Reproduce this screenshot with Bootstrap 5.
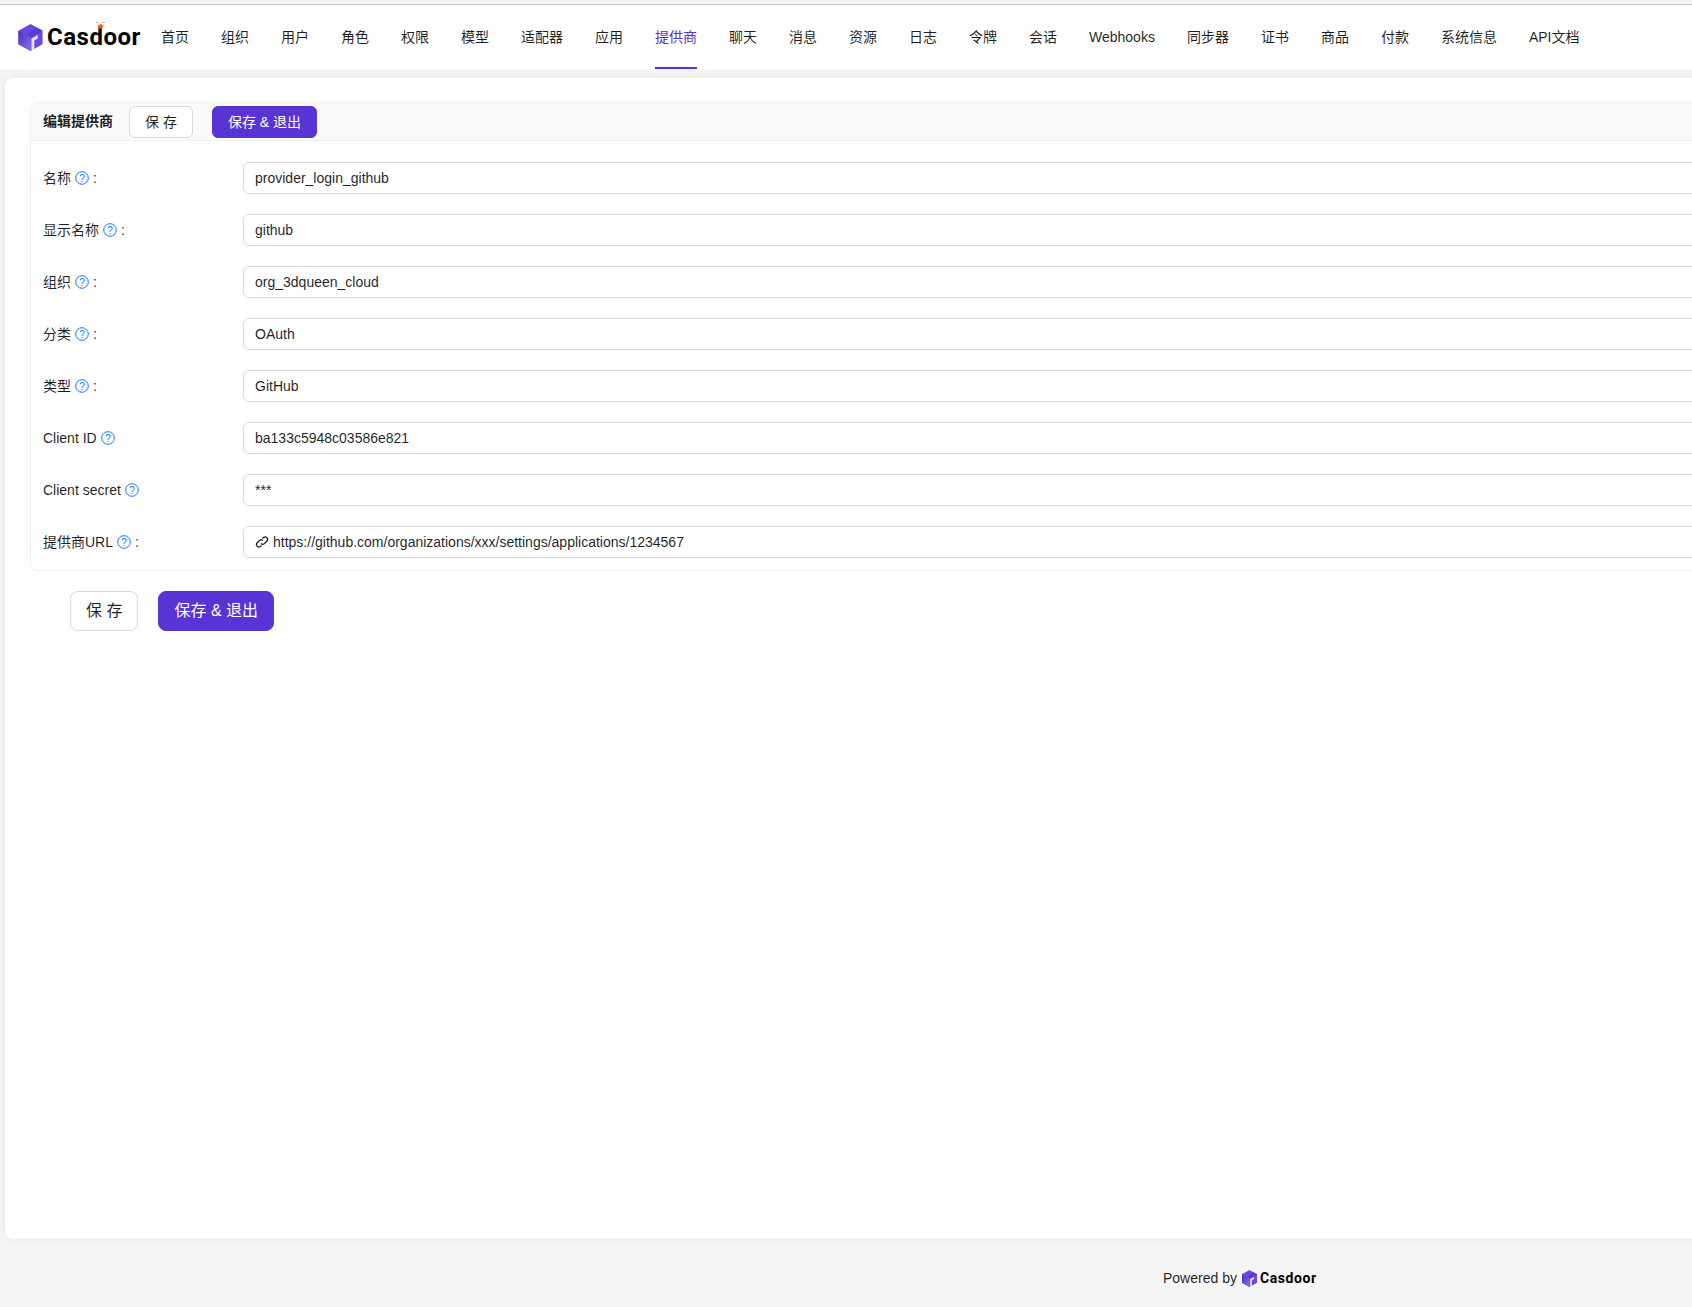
<!doctype html>
<html lang="zh">
<head>
<meta charset="utf-8">
<title>Casdoor</title>
<link href="https://cdn.jsdelivr.net/npm/bootstrap@5.3.0/dist/css/bootstrap.min.css" rel="stylesheet">
<style>
html,body{height:1307px;overflow:hidden}
body{background:#f5f5f5;font-family:"Liberation Sans","Noto Sans CJK SC",sans-serif;font-size:14px;color:rgba(0,0,0,.88);width:1692px}
.top-rule{height:5px;border-bottom:1px solid #ccc;background:#f5f5f5}
.app-bar{height:64px;background:#fff;align-items:stretch}
.brand-box{width:145px;flex:none;padding-left:18px}
.brand-word{font-family:Roboto,sans-serif;font-weight:700;font-size:24px;line-height:1;color:#000;margin-left:4px;letter-spacing:.5px;position:relative}
.brand-crown{position:absolute;left:49px;top:-3px}
.app-link{display:flex;align-items:center;padding:0 16px;color:rgba(0,0,0,.88);position:relative;text-decoration:none}
.app-link.is-on{color:#5734d3}
.app-link.is-on::after{content:"";position:absolute;left:16px;right:16px;bottom:0;height:2px;background:#5734d3}
.sheet{margin:9px 0 0 5px;width:1800px;height:1161px;background:#fff;border-radius:8px;padding:24px 25px;box-shadow:0 0 8px rgba(0,0,0,.07)}
.edit-card{border:1px solid #f0f0f0;border-radius:8px;height:469px;overflow:hidden}
.edit-head{height:38px;background:#fafafa;border-bottom:1px solid #f0f0f0;padding-left:12px;font-weight:700;gap:16px}
.edit-body{padding:21px 12px 0}
.field{height:32px;margin-bottom:20px}
.field-label{width:200px;flex:none;display:flex;align-items:center;gap:4px;color:rgba(0,0,0,.88)}
.field-box{flex:1;height:32px;border:1px solid #d9d9d9;border-radius:6px;padding:0 11px;display:flex;align-items:center;gap:4px;color:rgba(0,0,0,.88)}
.plain-btn,.main-btn{font-size:14px;height:32px;padding:0 15px;border-radius:6px;line-height:30px}
.plain-btn{background:#fff;border:1px solid #d9d9d9;color:rgba(0,0,0,.88)}
.main-btn{background:#5734d3;border:1px solid #5734d3;color:#fff}
.main-btn:hover{background:#5734d3;color:#fff}
.big-size{font-size:16px;height:40px;line-height:38px;border-radius:8px}
.head-pair{gap:19px}
.foot-row{gap:20px;margin:20px 0 0 40px}
.foot-area{padding-left:1163px;height:32px;margin-top:23px;color:rgba(0,0,0,.88);gap:5px}
.foot-word{font-family:Roboto,sans-serif;font-weight:700;font-size:14px;color:#000;line-height:1;margin-left:-2px;letter-spacing:.6px}
.help-mark{flex:none;fill:none;stroke:#1677ff;stroke-width:1}
.help-mark text{fill:#1677ff;stroke:none;font-family:"Liberation Sans",sans-serif;font-size:10px;text-anchor:middle}
.link-mark{flex:none;fill:none;stroke:#222;stroke-width:1.300}
</style>
</head>
<body>
<svg width="0" height="0" class="position-absolute"><defs>
  <linearGradient id="cube" x1="0" y1="0" x2="1" y2="1"><stop offset="0" stop-color="#4c2cc0"/><stop offset="1" stop-color="#8a70ec"/></linearGradient>
</defs></svg>
<div class="top-rule"></div>
<nav class="app-bar d-flex">
  <div class="brand-box d-flex align-items-center">
    <svg width="25" height="27" viewBox="0 0 25 28"><polygon points="12.5,0 25,7 25,21 12.5,28 0,21 0,7" fill="#6a48e0"/><polygon points="0,7 12.5,14 12.5,28 0,21" fill="url(#cube)"/><polygon points="12.5,14 25,7 19,3.500 9,10" fill="#5b3ad6"/><polygon points="13.500,15 20,11.500 20,15 16.500,17 16.500,26 13.500,28" fill="#e6e0fb"/></svg>
    <span class="brand-word">Casdoor<svg class="brand-crown" width="9" height="7" viewBox="0 0 9 7"><path d="M0 .5A1 1 0 0 1 2 .5M7 .5a1 1 0 0 1 2 0" stroke="#222" fill="none"/><path d="M1.500 2l1.500 1.500L4.500 1 6 3.500 7.500 2 6.500 6.500h-4z" fill="#e0662a"/></svg></span>
  </div>
  <a class="app-link" href="#">首页</a>
  <a class="app-link" href="#">组织</a>
  <a class="app-link" href="#">用户</a>
  <a class="app-link" href="#">角色</a>
  <a class="app-link" href="#">权限</a>
  <a class="app-link" href="#">模型</a>
  <a class="app-link" href="#">适配器</a>
  <a class="app-link" href="#">应用</a>
  <a class="app-link is-on" href="#">提供商</a>
  <a class="app-link" href="#">聊天</a>
  <a class="app-link" href="#">消息</a>
  <a class="app-link" href="#">资源</a>
  <a class="app-link" href="#">日志</a>
  <a class="app-link" href="#">令牌</a>
  <a class="app-link" href="#">会话</a>
  <a class="app-link" href="#">Webhooks</a>
  <a class="app-link" href="#">同步器</a>
  <a class="app-link" href="#">证书</a>
  <a class="app-link" href="#">商品</a>
  <a class="app-link" href="#">付款</a>
  <a class="app-link" href="#">系统信息</a>
  <a class="app-link" href="#">API文档</a>
</nav>
<main class="sheet">
  <section class="edit-card">
    <header class="edit-head d-flex align-items-center">
      <span>编辑提供商</span>
      <div class="d-flex head-pair">
        <button class="btn plain-btn">保 存</button>
        <button class="btn main-btn">保存 &amp; 退出</button>
      </div>
    </header>
    <div class="edit-body">
      <div class="field d-flex"><label class="field-label">名称 <svg class="help-mark" width="14" height="14" viewBox="0 0 14 14"><circle cx="7" cy="7" r="6.300"/><text x="7" y="10.500">?</text></svg> :</label><div class="field-box">provider_login_github</div></div>
      <div class="field d-flex"><label class="field-label">显示名称 <svg class="help-mark" width="14" height="14" viewBox="0 0 14 14"><circle cx="7" cy="7" r="6.300"/><text x="7" y="10.500">?</text></svg> :</label><div class="field-box">github</div></div>
      <div class="field d-flex"><label class="field-label">组织 <svg class="help-mark" width="14" height="14" viewBox="0 0 14 14"><circle cx="7" cy="7" r="6.300"/><text x="7" y="10.500">?</text></svg> :</label><div class="field-box">org_3dqueen_cloud</div></div>
      <div class="field d-flex"><label class="field-label">分类 <svg class="help-mark" width="14" height="14" viewBox="0 0 14 14"><circle cx="7" cy="7" r="6.300"/><text x="7" y="10.500">?</text></svg> :</label><div class="field-box">OAuth</div></div>
      <div class="field d-flex"><label class="field-label">类型 <svg class="help-mark" width="14" height="14" viewBox="0 0 14 14"><circle cx="7" cy="7" r="6.300"/><text x="7" y="10.500">?</text></svg> :</label><div class="field-box">GitHub</div></div>
      <div class="field d-flex"><label class="field-label">Client ID <svg class="help-mark" width="14" height="14" viewBox="0 0 14 14"><circle cx="7" cy="7" r="6.300"/><text x="7" y="10.500">?</text></svg></label><div class="field-box">ba133c5948c03586e821</div></div>
      <div class="field d-flex"><label class="field-label">Client secret <svg class="help-mark" width="14" height="14" viewBox="0 0 14 14"><circle cx="7" cy="7" r="6.300"/><text x="7" y="10.500">?</text></svg></label><div class="field-box">***</div></div>
      <div class="field d-flex"><label class="field-label">提供商URL <svg class="help-mark" width="14" height="14" viewBox="0 0 14 14"><circle cx="7" cy="7" r="6.300"/><text x="7" y="10.500">?</text></svg> :</label><div class="field-box"><svg class="link-mark" width="14" height="14" viewBox="0 0 14 14"><path d="M6 8.500a2.500 2.500 0 0 0 3.500 0l2.500-2.500a2.500 2.500 0 0 0-3.500-3.500L7.500 3.500"/><path d="M8 5.500a2.500 2.500 0 0 0-3.500 0L2 8a2.500 2.500 0 0 0 3.500 3.500l1-1"/></svg>https://github.com/organizations/xxx/settings/applications/1234567</div></div>
    </div>
  </section>
  <div class="foot-row d-flex">
    <button class="btn plain-btn big-size">保 存</button>
    <button class="btn main-btn big-size">保存 &amp; 退出</button>
  </div>
</main>
<footer class="foot-area d-flex align-items-center">
  <span>Powered by</span>
  <svg width="15" height="17" viewBox="0 0 25 28"><polygon points="12.5,0 25,7 25,21 12.5,28 0,21 0,7" fill="#6a48e0"/><polygon points="0,7 12.5,14 12.5,28 0,21" fill="url(#cube)"/><polygon points="12.5,14 25,7 19,3.500 9,10" fill="#5b3ad6"/><polygon points="13.500,15 20,11.500 20,15 16.500,17 16.500,26 13.500,28" fill="#e6e0fb"/></svg>
  <span class="foot-word">Casdoor</span>
</footer>
</body>
</html>
